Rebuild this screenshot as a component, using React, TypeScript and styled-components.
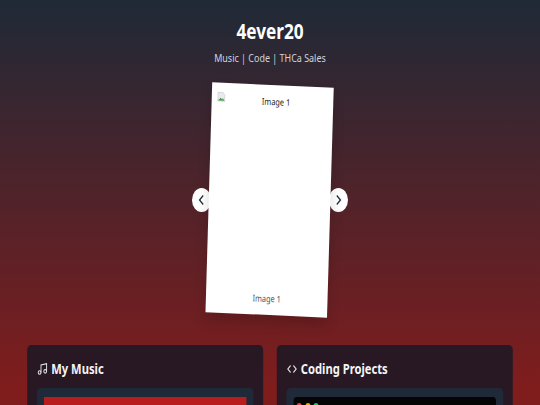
import React from "react";
import styled, { createGlobalStyle } from "styled-components";

const Global = createGlobalStyle`
  html, body { margin: 0; padding: 0; width: 540px; height: 405px; overflow: hidden; background: #7f1d1d; }
  * { box-sizing: border-box; }
`;

const Page = styled.div`
  width: 675px;
  height: 405px;
  overflow: hidden;
  transform: scaleX(0.8);
  transform-origin: 0 0;
  background: linear-gradient(180deg, #1f2937 0%, #7f1d1d 95%);
  font-family: "Noto Sans", sans-serif;
  color: #fff;
  padding: 18px 34px 0;
`;

const Header = styled.header`
  text-align: center;
`;

const Title = styled.h1`
  margin: 0;
  font-size: 21.5px;
  line-height: 26px;
  font-weight: 700;
`;

const Subtitle = styled.p`
  margin: 7px 0 0;
  font-size: 11.2px;
  line-height: 14px;
  color: #d1d5db;
`;

const Carousel = styled.section`
  position: relative;
  width: 195px;
  height: 250px;
  margin: 10px auto 0;
  display: flex;
  align-items: center;
  justify-content: center;
`;

const Polaroid = styled.figure`
  position: relative;
  margin: 0 1px 0 0;
  width: 152px;
  height: 230px;
  padding: 11px 8px 10px;
  background: #fff;
  transform: rotate(2.1deg);
  box-shadow: 0 8px 14px rgba(0, 0, 0, 0.14);
  display: flex;
  flex-direction: column;
  justify-content: space-between;
  align-items: center;
  z-index: 3;
`;

const BrokenIcon = styled.svg`
  position: absolute;
  top: 9px;
  left: 7px;
  width: 10px;
  height: 10px;
`;

const AltText = styled.span`
  font-size: 9.2px;
  line-height: 12px;
  color: #222;
  padding-left: 9px;
`;

const Caption = styled.figcaption`
  font-size: 9.2px;
  line-height: 12px;
  color: #4b5563;
`;

const Arrow = styled.button<{ $side: "left" | "right" }>`
  position: absolute;
  top: 113px;
  ${(p) => (p.$side === "left" ? "left: 0;" : "right: 0;")}
  width: 24px;
  height: 24px;
  border: 0;
  padding: 0;
  border-radius: 50%;
  background: #fff;
  color: #1f2937;
  display: flex;
  align-items: center;
  justify-content: center;
  z-index: 2;
`;

const Columns = styled.div`
  display: grid;
  grid-template-columns: 295px 295px;
  gap: 17px;
  margin-top: 20px;
`;

const Panel = styled.section`
  height: 80px;
  background: #281824;
  border-radius: 5px;
  padding: 14px 12px 0;
`;

const PanelTitle = styled.h2`
  margin: 0;
  display: flex;
  align-items: center;
  gap: 4px;
  font-size: 14px;
  line-height: 20px;
  font-weight: 700;
  color: #f3f4f6;
`;

const Inner = styled.div`
  margin-top: 9px;
  height: 40px;
  background: #1f2937;
  border-radius: 5px;
  padding: 9px 9px 0;
`;

const RedBlock = styled.div`
  height: 40px;
  background: #b91c1c;
`;

const Terminal = styled.div`
  height: 40px;
  background: #050505;
  border-radius: 4px;
  padding: 6px 4px;
  display: flex;
  gap: 4.6px;
`;

const Dot = styled.span<{ $c: string }>`
  width: 6px;
  height: 5px;
  border-radius: 50%;
  background: ${(p) => p.$c};
`;

export default function App() {
  return (
    <Page>
      <Global />
      <Header>
        <Title>4ever20</Title>
        <Subtitle>Music | Code | THCa Sales</Subtitle>
      </Header>
      <Carousel>
        <Arrow $side="left" aria-label="Previous">
          <svg width="12" height="12" viewBox="0 0 12 12" fill="none" stroke="currentColor" strokeWidth="1.6">
            <path d="M8 1.5 3.5 6 8 10.5" />
          </svg>
        </Arrow>
        <Polaroid>
          <BrokenIcon viewBox="0 0 10 10">
            <path d="M0.5 0.5h6l3 3v6h-9z" fill="#e8eaed" stroke="#b8bcc4" strokeWidth="0.6" />
            <path d="M1 9l3-3 2 1.5 1-1 2 2.5z" fill="#4a9e4e" />
          </BrokenIcon>
          <AltText>Image 1</AltText>
          <Caption>Image 1</Caption>
        </Polaroid>
        <Arrow $side="right" aria-label="Next">
          <svg width="12" height="12" viewBox="0 0 12 12" fill="none" stroke="currentColor" strokeWidth="1.6">
            <path d="M4 1.5 8.5 6 4 10.5" />
          </svg>
        </Arrow>
      </Carousel>
      <Columns>
        <Panel>
          <PanelTitle>
            <svg width="14" height="14" viewBox="0 0 24 24" fill="none" stroke="#e5e7eb" strokeWidth="2">
              <path d="M9 18V5l12-2v13" />
              <circle cx="6" cy="18" r="3" />
              <circle cx="18" cy="16" r="3" />
            </svg>
            My Music
          </PanelTitle>
          <Inner>
            <RedBlock />
          </Inner>
        </Panel>
        <Panel>
          <PanelTitle>
            <svg width="14" height="14" viewBox="0 0 24 24" fill="none" stroke="#e5e7eb" strokeWidth="2">
              <path d="M9 6 3 12l6 6M15 6l6 6-6 6" />
            </svg>
            Coding Projects
          </PanelTitle>
          <Inner>
            <Terminal>
              <Dot $c="#ef4444" />
              <Dot $c="#eab308" />
              <Dot $c="#22c55e" />
            </Terminal>
          </Inner>
        </Panel>
      </Columns>
    </Page>
  );
}
